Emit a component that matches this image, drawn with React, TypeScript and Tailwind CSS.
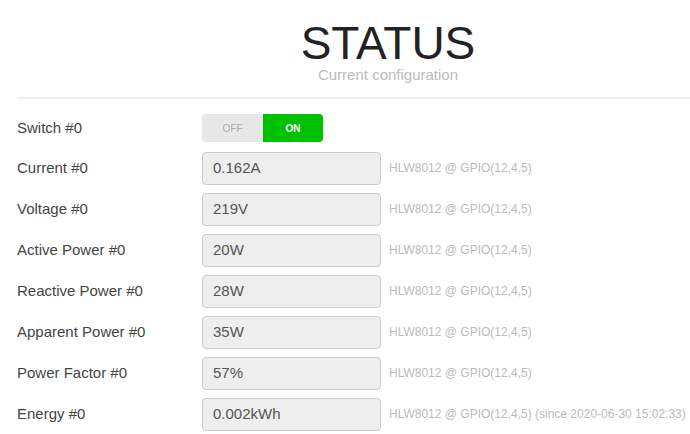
const ROWS = [
  { label: "Current #0", value: "0.162A", hint: "HLW8012 @ GPIO(12,4,5)" },
  { label: "Voltage #0", value: "219V", hint: "HLW8012 @ GPIO(12,4,5)" },
  { label: "Active Power #0", value: "20W", hint: "HLW8012 @ GPIO(12,4,5)" },
  { label: "Reactive Power #0", value: "28W", hint: "HLW8012 @ GPIO(12,4,5)" },
  { label: "Apparent Power #0", value: "35W", hint: "HLW8012 @ GPIO(12,4,5)" },
  { label: "Power Factor #0", value: "57%", hint: "HLW8012 @ GPIO(12,4,5)" },
  {
    label: "Energy #0",
    value: "0.002kWh",
    hint: "HLW8012 @ GPIO(12,4,5) (since 2020-06-30 15:02:33)",
  },
];

export default function App() {
  return (
    <div className="h-[434px] w-[690px] overflow-hidden bg-white font-['Liberation_Sans',Arial,sans-serif]">
      <div className="ml-[17px] w-[742px]">
        {/* header */}
        <div className="flex flex-col items-center pt-[20px]">
          <h1 className="text-[46px] leading-[46px] font-normal text-[#222]">STATUS</h1>
          <p className="text-[15px] leading-[17px] text-[#bbb]">Current configuration</p>
        </div>
        <div className="mt-[14px] h-[2px] bg-[#f0f0f0]" />

        <div className="flex flex-col gap-[9px] pt-[14px]">
          <div className="flex h-[30px] items-center">
            <label className="w-[185px] text-[15px] text-[#444]">Switch #0</label>
            <div className="flex h-[28px] text-[10px] font-bold">
              <span className="flex w-[61px] items-center justify-center rounded-l-[4px] bg-[#e8e8e8] font-normal text-[#aaa]">
                OFF
              </span>
              <span className="flex w-[60px] items-center justify-center rounded-r-[4px] bg-[#00c000] text-white">
                ON
              </span>
            </div>
          </div>

          {ROWS.map((row) => (
            <div key={row.label} className="flex h-[32px] items-center">
              <label className="w-[185px] text-[15px] text-[#444]">{row.label}</label>
              <div className="flex h-[33px] w-[179px] items-center rounded-[4px] border border-[#ccc] bg-[#eee] px-[10px] text-[15px] text-[#555]">
                {row.value}
              </div>
              <span className="ml-[8px] text-[12px] text-[#bbb]">{row.hint}</span>
            </div>
          ))}
        </div>
      </div>
    </div>
  );
}
